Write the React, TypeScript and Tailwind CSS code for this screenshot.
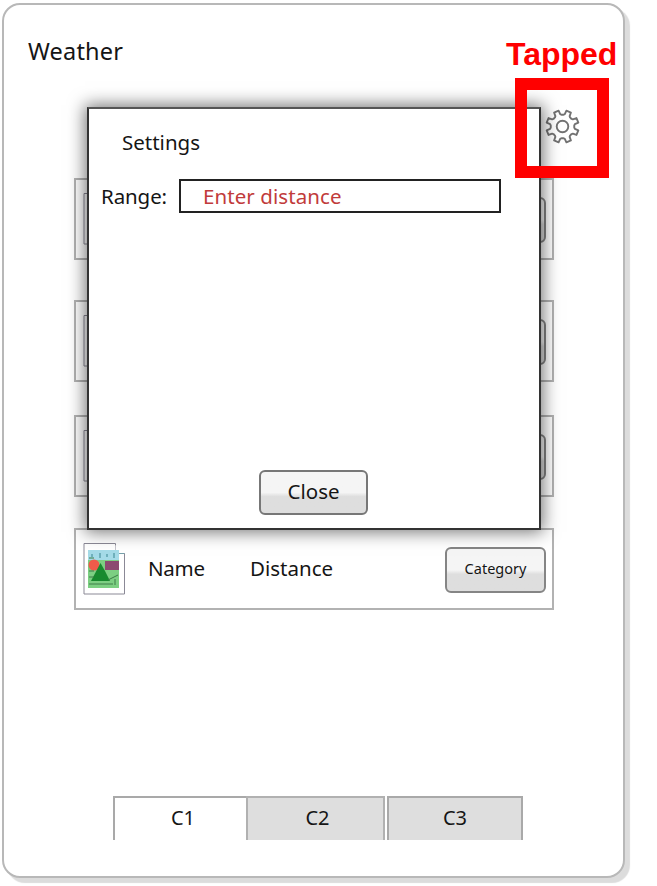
function GearIcon() {
  const cx = 17.5;
  const points: string[] = [];
  for (let i = 0; i < 8; i++) {
    const base = (i * 45 - 67.5) * (Math.PI / 180);
    const steps: [number, number][] = [
      [-0.3, 11.8],
      [-0.21, 12.6],
      [-0.15, 16.3],
      [0.15, 16.3],
      [0.21, 12.6],
      [0.3, 11.8],
    ];
    for (const [offset, radius] of steps) {
      points.push(
        `${(cx + radius * Math.cos(base + offset)).toFixed(2)},${(cx + radius * Math.sin(base + offset)).toFixed(2)}`,
      );
    }
  }
  return (
    <svg width="35" height="35" viewBox="0 0 35 35" fill="none" stroke="#727272" strokeWidth="1.9" strokeLinejoin="round">
      <polygon points={points.join(" ")} />
      <circle cx="17.5" cy="17.5" r="5.8" />
    </svg>
  );
}

function PictureIcon() {
  return (
    <svg width="43" height="53" viewBox="0 0 43 53" fill="none">
      <path d="M1 0.5H32.5V10.5H41.5V51H1Z" fill="#fff" stroke="#8b8996" />
      <path d="M32.5 2L41 10.5H32.5Z" fill="#fff" />
      <path d="M32.5 10.5H41.5" stroke="#76a0aa" />
      <rect x="5" y="7" width="31" height="12" fill="#a5dbe8" />
      <rect x="5" y="17" width="31" height="28" fill="#7ccf82" />
      <path d="M9 11v3M17 10v5M24 11v3M31 10v5" stroke="#5a9fab" strokeWidth="1.4" />
      <circle cx="11" cy="22" r="5.5" fill="#ef5b4a" />
      <rect x="22" y="18" width="14" height="9" fill="#8c4a70" />
      <path d="M17.5 20L22 28L27 38H8Z" fill="#178a2e" />
      <path d="M6 15h5M6 28h5M6 34h5M6 41h24M25 37l10-5M32 36v6" stroke="#3c7c48" />
    </svg>
  );
}

type Place = { name: string; distance: string; category: string };

function Card({ space, place }: { space: string; place?: Place }) {
  return (
    <div
      className={`flex h-[82px] w-[480px] shrink-0 items-center border-2 border-[#b2b2b2] bg-white pl-[7px] pr-[6px] ${space}`}
    >
      <div className="w-[43px] pt-[1px]">
        <PictureIcon />
      </div>
      <span className="ml-[22px] w-[102px] pb-[2px] text-[20.5px] tracking-[-0.25px]">{place?.name}</span>
      <span className="pb-[2px] text-[20.5px]">{place?.distance}</span>
      <button className="ml-auto mt-[2px] h-[46px] w-[101px] rounded-[6px] border-2 border-[#858585] bg-linear-to-b from-[#f5f5f5] from-50% to-[#dedede] to-60% pb-[3px] text-[14.5px]">
        {place?.category}
      </button>
    </div>
  );
}

export default function App() {
  return (
    <div className="h-[886px] w-[657px] overflow-hidden bg-white pl-[2px] pt-[3px] font-['Noto_Sans','Open_Sans',sans-serif] leading-none text-[#151515]">
      <div className="relative flex h-[875px] w-[623px] flex-col rounded-[18px] border-2 border-[#b8b8b8] bg-white shadow-[5px_5px_1px_#dcdcdc]">
        <h1 className="ml-[24px] mt-[32px] h-[28px] text-[23.5px] leading-[28px] tracking-[0.2px]">Weather</h1>
        <button className="ml-[541px] mt-[44px] h-[35px] w-[35px]">
          <GearIcon />
        </button>
        <div className="ml-[70px] mt-[34px] flex flex-col">
          <Card space="" />
          <Card space="mt-[40px]" />
          <Card space="mt-[33px]" />
          <Card space="mt-[31px]" place={{ name: "Name", distance: "Distance", category: "Category" }} />
        </div>
        <div className="ml-[109px] mt-[186px] flex h-[44px] text-center text-[20px] leading-[39px]">
          <div className="w-[133px] border-l-2 border-t-2 border-[#a9a9a9] pl-[5px]">C1</div>
          <div className="w-[139px] border-x-2 border-t-2 border-[#b1b1b1] bg-[#dedede] pl-[4px]">C2</div>
          <div className="ml-[2px] w-[136px] border-x-2 border-t-2 border-[#a9a9a9] bg-[#dedede]">C3</div>
        </div>

        <div className="absolute left-[83px] top-[102px] flex h-[423px] w-[454px] flex-col border-2 border-[#333] border-t-[#555] bg-white shadow-[0_0_16px_2px_rgba(0,0,0,0.55)]">
          <h2 className="ml-[33px] mt-[21px] h-[24px] text-[20.5px] leading-[24px]">Settings</h2>
          <label className="ml-[12px] mt-[25px] flex h-[34px] items-center text-[20.5px]">
            <span className="w-[78px] tracking-[-0.1px]">Range:</span>
            <span className="flex h-[34px] w-[322px] items-center border-2 border-[#222] pl-[22px] tracking-[0.08px] text-[#c13b3b]">
              Enter distance
            </span>
          </label>
          <button className="ml-[170px] mt-[257px] h-[45px] w-[109px] rounded-[6px] border-2 border-[#777] bg-linear-to-b from-[#f5f5f5] from-50% to-[#dedede] to-60% pb-[2px] text-[20.5px]">
            Close
          </button>
        </div>

        <div className="absolute left-[502px] top-[31px] whitespace-nowrap font-['Liberation_Sans',Arial,sans-serif] text-[32px] font-bold leading-[36px] text-[#ff0000]">
          Tapped
        </div>
        <div className="absolute left-[511px] top-[73px] h-[100px] w-[94px] border-[12px] border-[#ff0000]" />
      </div>
    </div>
  );
}
